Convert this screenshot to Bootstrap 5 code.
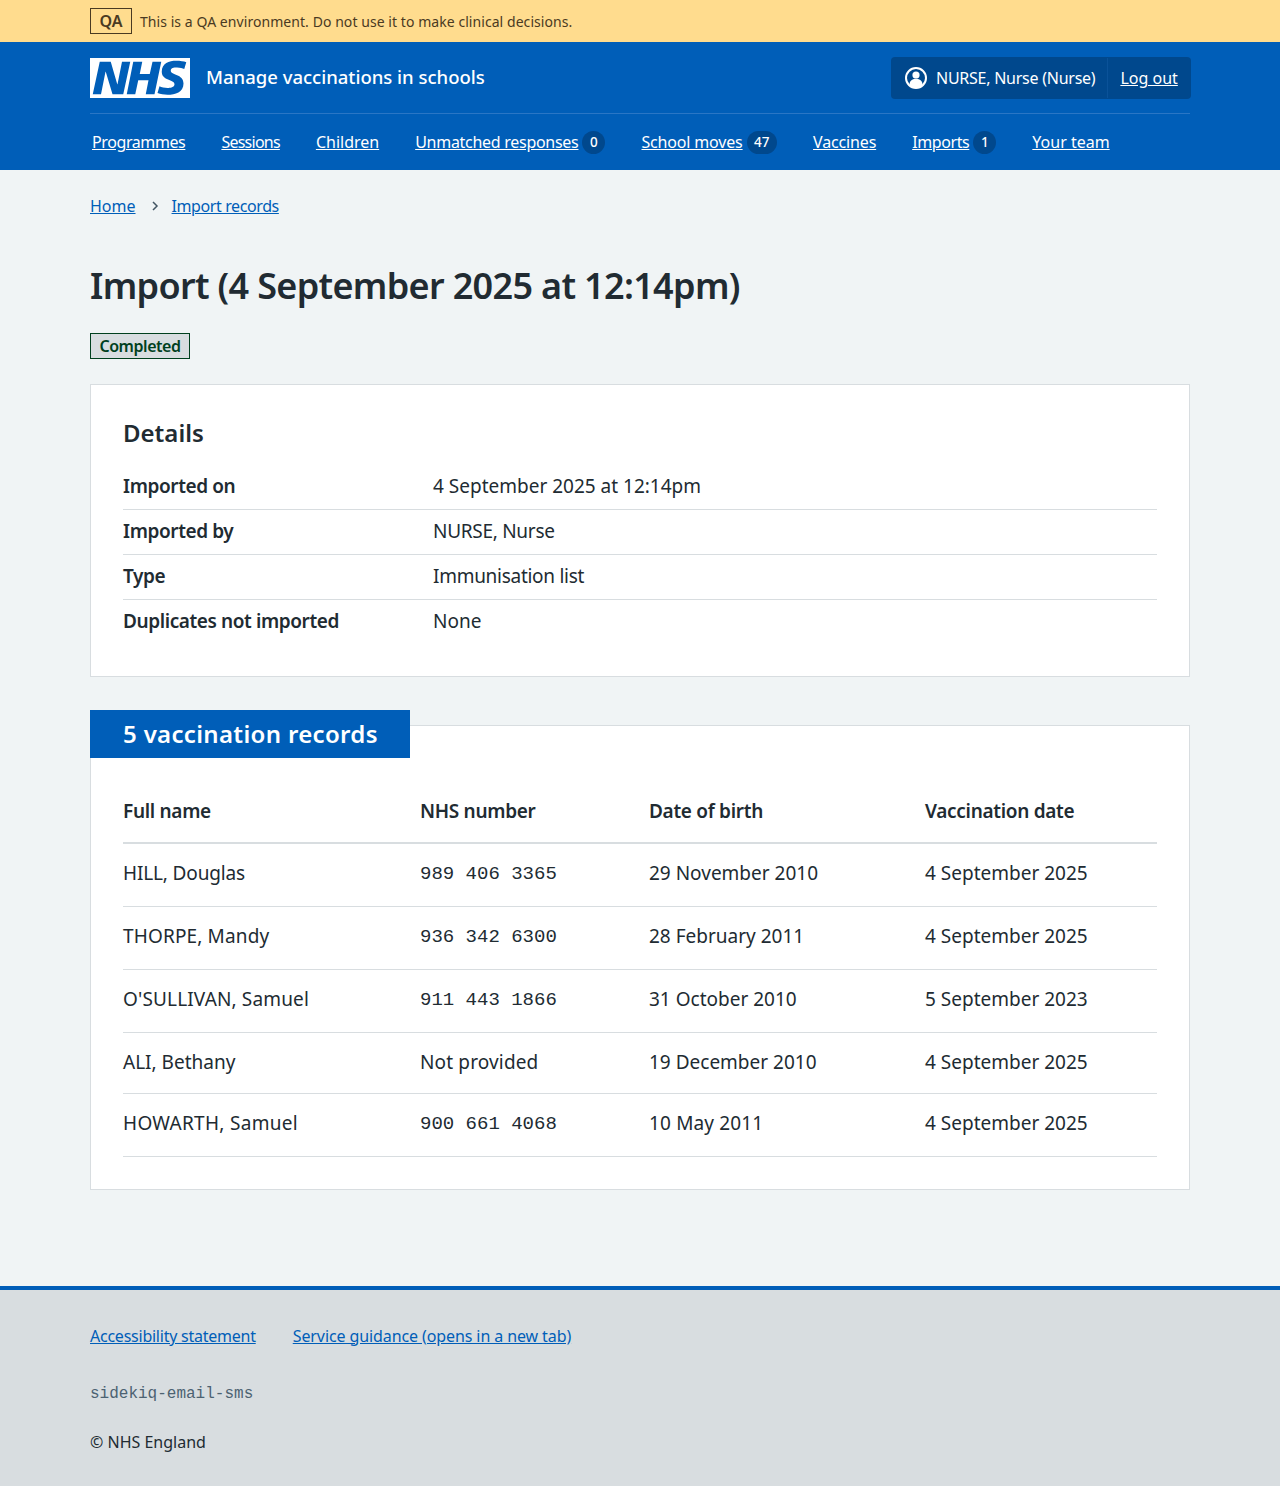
<!DOCTYPE html>
<html lang="en">
<head>
<meta charset="utf-8">
<title>Import – Manage vaccinations in schools</title>
<link href="https://cdn.jsdelivr.net/npm/bootstrap@5.3.0/dist/css/bootstrap.min.css" rel="stylesheet">
<style>
body { font-family: "Noto Sans", "Liberation Sans", sans-serif; color: #212b32; background: #f0f4f5; font-size: 19px; line-height: 28px; }
a { color: #005eb8; }
.tight-05 { letter-spacing: -.1px; }
.tight-1 { letter-spacing: -.15px; }
.tight-2 { letter-spacing: -.17px; }
.tight-25 { letter-spacing: -.24px; }
.tight-3 { letter-spacing: -.28px; }
.tight-4 { letter-spacing: -.4px; }
.tight-7 { letter-spacing: -.75px; }
.loose-1 { letter-spacing: .15px; }
.loose-3 { letter-spacing: .3px; }
.wrap { width: 1100px; margin: 0 auto; }
.qa-bar { background: #ffdc8e; height: 42px; font-size: 14px; color: #4a3a22; }
.qa-tag { border: 1px solid #4a3a22; font-weight: 600; font-size: 16px; line-height: 24px; padding: 0 8px; width: 42px; height: 26px; text-align: center; }
.qa-text { padding-top: 2px; letter-spacing: .06px; }
.site-head { background: #005eb8; height: 128px; color: #fff; }
.head-top { height: 72px; padding-top: 1px; border-bottom: 1px solid #2a76c5; }
.logo-svg { width: 100px; height: 40px; display: block; }
.service-name { font-size: 18.5px; line-height: 24px; font-weight: 500; padding-bottom: 2px; }
.user-box { background: #00488d; border-radius: 4px; height: 42px; width: 300px; margin-right: -1px; font-size: 16px; white-space: nowrap; }
.user-name { padding: 0 12px 0 14px; height: 40px; border-right: 1px solid #0a5299; letter-spacing: -.25px; gap: 9px; }
.user-box a { color: #fff; padding: 0 12px; }
.main-nav { height: 56px; font-size: 16px; padding-left: 2px; gap: 36px; }
.main-nav a { color: #fff; }
.count-pill { background: #00488d; color: #fff; font-size: 13.5px; font-weight: 500; line-height: 23px; height: 23px; min-width: 23px; padding: 0 7.5px; border-radius: 12px; margin-left: 4px; text-align: center; }
.crumbs { font-size: 16px; line-height: 24px; padding-top: 24px; gap: 13px; }
.crumbs svg { width: 8px; height: 12px; color: #425563; margin: 0 0 0 2px; }
.page-title { font-size: 36px; line-height: 44px; font-weight: 600; margin: 46px 0 25px; letter-spacing: -.67px; }
.status-tag { display: block; background: #d8dde0; border: 1px solid #00401e; color: #00401e; font-size: 16px; font-weight: 600; line-height: 24px; width: 100px; height: 26px; text-align: center; letter-spacing: -.45px; }
.panel-box { background: #fff; border: 1px solid #d8dde0; padding: 32px; }
.details-box { margin-top: 25px; padding-bottom: 31px; }
.panel-title { font-size: 24px; line-height: 32px; font-weight: 600; margin: 0 0 16px; }
.sum-row { display: flex; padding: 7px 0 9px; line-height: 28px; height: 45px; border-bottom: 1px solid #d8dde0; }
.sum-row:last-child { border-bottom: 0; }
.sum-key { width: 310px; font-weight: 600; letter-spacing: -.4px; }
.feature-wrap { position: relative; margin-top: 48px; }
.feature-box { padding-top: 71px; }
.feature-head { position: absolute; left: 0; top: -15px; width: 320px; height: 48px; background: #005eb8; color: #fff; font-size: 24px; line-height: 48px; font-weight: 600; padding-left: 33px; letter-spacing: .33px; }
.rec-table { margin: 0; table-layout: fixed; width: 100%; color: #212b32; }
.rec-table .c1 { width: 297px; }
.rec-table .c2 { width: 229px; }
.rec-table .c3 { width: 276px; }
.rec-table th, .rec-table td { padding: 15px 0 17px; font-size: 19px; line-height: 28px; background: transparent; color: #212b32; border-bottom: 1px solid #d8dde0; vertical-align: top; }
.rec-table th { font-weight: 600; border-bottom: 2px solid #d8dde0; padding: 0 0 17px; letter-spacing: -.3px; }
.rec-table td { height: 63px; }
.rec-table tr.short td { height: 61px; }
.rec-table td.mono { font-family: "Liberation Mono", monospace; padding: 16px 0; }
.site-foot { margin-top: 96px; background: #d8dde0; border-top: 4px solid #005eb8; height: 200px; font-size: 16px; line-height: 24px; padding-top: 34px; }
.foot-links { gap: 37px; }
.build-tag { font-family: "Liberation Mono", monospace; color: #4c6272; margin: 34px 0 24px; }
</style>
</head>
<body>
<div class="qa-bar">
  <div class="wrap d-flex align-items-center gap-2 h-100">
    <strong class="qa-tag">QA</strong>
    <span class="qa-text">This is a QA environment. Do not use it to make clinical decisions.</span>
  </div>
</div>
<header class="site-head">
  <div class="wrap">
    <div class="head-top d-flex align-items-center justify-content-between">
      <div class="d-flex align-items-center gap-3">
        <svg class="logo-svg" viewBox="0 0 40 16" role="img" aria-label="NHS"><path fill="#fff" d="M0 0h40v16H0z"/><path fill="#005eb8" d="M3.9 1.5h4.4l2.6 9h.1l1.8-9h3.3l-2.8 13H9l-2.7-9h-.1l-1.8 9H1.1M17.3 1.5h3.6l-1 4.9h4L25 1.5h3.5l-2.7 13h-3.5l1.1-5.6h-4.1l-1.2 5.6h-3.4M37.7 4.4c-.7-.3-1.6-.6-2.9-.6-1.4 0-2.5.2-2.5 1.3 0 1.8 5.1 1.2 5.1 5.1 0 3.6-3.3 4.5-6.4 4.5-1.3 0-2.9-.3-4-.7l.8-2.7c.7.4 2.1.7 3.2.7s2.8-.2 2.8-1.5c0-2.1-5.1-1.3-5.1-5 0-3.4 2.9-4.4 5.8-4.4 1.6 0 3.1.2 4 .6"/></svg>
        <span class="service-name">Manage vaccinations in schools</span>
      </div>
      <div class="user-box d-flex align-items-center">
        <div class="user-name d-flex align-items-center">
          <svg width="22" height="22" viewBox="0 0 22 22" aria-hidden="true"><circle cx="11" cy="11" r="10" fill="none" stroke="#fff" stroke-width="2"/><circle cx="11" cy="8" r="3.6" fill="#fff"/><path fill="#fff" d="M4.4 18.4c0-4.4 2.6-6.6 6.6-6.6s6.6 2.2 6.6 6.6A10 10 0 0 1 11 21a10 10 0 0 1-6.6-2.6z"/></svg>
          <span>NURSE, Nurse (Nurse)</span>
        </div>
        <a href="#">Log out</a>
      </div>
    </div>
    <nav class="main-nav d-flex align-items-center">
      <a href="#" class="tight-4">Programmes</a>
      <a href="#" class="tight-7">Sessions</a>
      <a href="#">Children</a>
      <span class="d-flex align-items-center"><a href="#" class="tight-3">Unmatched responses</a><span class="count-pill">0</span></span>
      <span class="d-flex align-items-center"><a href="#" class="tight-2">School moves</a><span class="count-pill">47</span></span>
      <a href="#" class="tight-1">Vaccines</a>
      <span class="d-flex align-items-center"><a href="#" class="tight-4">Imports</a><span class="count-pill">1</span></span>
      <a href="#">Your team</a>
    </nav>
  </div>
</header>
<main class="wrap">
  <nav class="crumbs d-flex align-items-center">
    <a href="#">Home</a>
    <svg viewBox="0 0 8 12" aria-hidden="true"><path d="M2 2l4 4-4 4" fill="none" stroke="currentColor" stroke-width="1.5"/></svg>
    <a href="#" class="tight-4">Import records</a>
  </nav>
  <h1 class="page-title">Import (4 September 2025 at 12:14pm)</h1>
  <strong class="status-tag">Completed</strong>
  <section class="panel-box details-box">
    <h2 class="panel-title">Details</h2>
    <div class="sum-row"><div class="sum-key">Imported on</div><div>4 September 2025 at 12:14pm</div></div>
    <div class="sum-row"><div class="sum-key">Imported by</div><div class="tight-3">NURSE, Nurse</div></div>
    <div class="sum-row"><div class="sum-key">Type</div><div class="tight-3">Immunisation list</div></div>
    <div class="sum-row"><div class="sum-key">Duplicates not imported</div><div>None</div></div>
  </section>
  <section class="feature-wrap">
    <h2 class="feature-head m-0">5 vaccination records</h2>
    <div class="panel-box feature-box">
      <table class="table rec-table">
        <colgroup><col class="c1"><col class="c2"><col class="c3"><col></colgroup>
        <thead><tr><th>Full name</th><th>NHS number</th><th>Date of birth</th><th>Vaccination date</th></tr></thead>
        <tbody>
          <tr><td class="tight-1">HILL, Douglas</td><td class="mono">989 406 3365</td><td>29 November 2010</td><td>4 September 2025</td></tr>
          <tr><td class="loose-1">THORPE, Mandy</td><td class="mono">936 342 6300</td><td>28 February 2011</td><td>4 September 2025</td></tr>
          <tr><td class="loose-1">O'SULLIVAN, Samuel</td><td class="mono">911 443 1866</td><td>31 October 2010</td><td>5 September 2023</td></tr>
          <tr class="short"><td>ALI, Bethany</td><td class="loose-1">Not provided</td><td>19 December 2010</td><td>4 September 2025</td></tr>
          <tr><td class="loose-3">HOWARTH, Samuel</td><td class="mono">900 661 4068</td><td class="loose-1">10 May 2011</td><td>4 September 2025</td></tr>
        </tbody>
      </table>
    </div>
  </section>
</main>
<footer class="site-foot">
  <div class="wrap">
    <div class="foot-links d-flex"><a href="#" class="tight-25">Accessibility statement</a><a href="#" class="tight-05">Service guidance (opens in a new tab)</a></div>
    <div class="build-tag">sidekiq-email-sms</div>
    <div>© NHS England</div>
  </div>
</footer>
<script src="https://cdn.jsdelivr.net/npm/bootstrap@5.3.0/dist/js/bootstrap.bundle.min.js"></script>
</body>
</html>
